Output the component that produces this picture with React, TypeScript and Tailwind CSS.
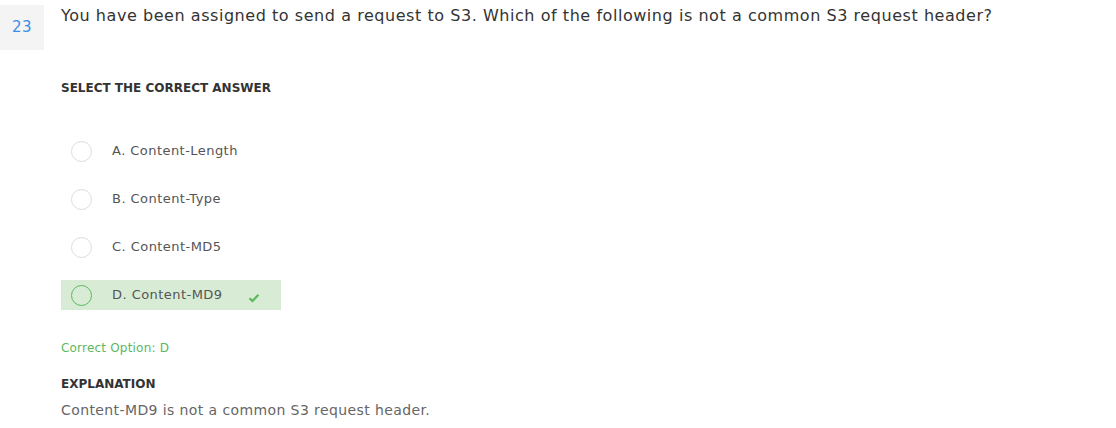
export default function App() {
  const options = [
    { key: "A", label: "Content-Length", correct: false },
    { key: "B", label: "Content-Type", correct: false },
    { key: "C", label: "Content-MD5", correct: false },
    { key: "D", label: "Content-MD9", correct: true },
  ];

  return (
    <div
      className="h-[428px] w-[1116px] bg-white"
      style={{ fontFamily: '"DejaVu Sans", "Liberation Sans", sans-serif' }}
    >
      <div className="flex pt-[5px]">
        <div className="flex h-[45px] w-[44px] items-center justify-center bg-[#f4f4f4] text-[15px] tracking-[0.5px] text-[#3a8ee6]">
          23
        </div>
        <div className="ml-[17px] -mt-[1px] text-[16px] tracking-[0.55px] text-[#333]">
          You have been assigned to send a request to S3. Which of the following is not a common S3 request header?
        </div>
      </div>

      <div className="ml-[61px]">
        <div className="mt-[29px] text-[12px] font-bold text-[#333]">
          SELECT THE CORRECT ANSWER
        </div>

        <div className="mt-[39px] flex flex-col gap-[18px]">
          {options.map((o) => (
            <div
              key={o.key}
              className={
                o.correct
                  ? "flex h-[30px] w-[220px] items-center bg-[#d8ecd5] pl-[10px]"
                  : "flex h-[30px] w-[220px] items-center pl-[10px]"
              }
            >
              <div
                className={
                  o.correct
                    ? "h-[21px] w-[21px] rounded-full border border-[#5cb85c]"
                    : "h-[21px] w-[21px] rounded-full border border-[#ddd]"
                }
              />
              <div className="ml-[20px] text-[13px] tracking-[0.45px] text-[#555]">
                {o.key}. {o.label}
              </div>
              {o.correct && (
                <svg className="ml-[26px] mt-[6px]" width="12" height="10" viewBox="0 0 12 10">
                  <path d="M1.5 5.2 L4.5 8 L10.5 1.8" fill="none" stroke="#5cb85c" strokeWidth="2.2" />
                </svg>
              )}
            </div>
          ))}
        </div>

        <div className="mt-[29px] text-[12px] tracking-[0.2px] text-[#5cb85c]">
          Correct Option: D
        </div>
        <div className="mt-[18px] text-[12px] font-bold text-[#333]">
          EXPLANATION
        </div>
        <div className="mt-[7px] text-[14px] tracking-[0.4px] text-[#666]">
          Content-MD9 is not a common S3 request header.
        </div>
      </div>
    </div>
  );
}
